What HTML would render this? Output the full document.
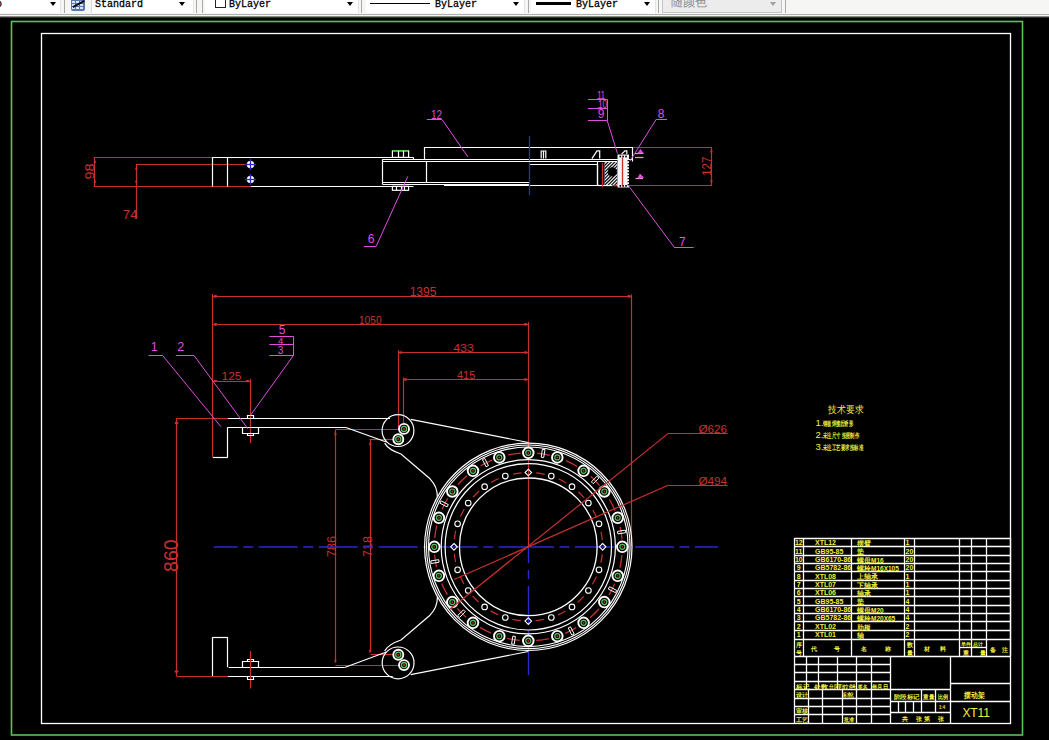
<!DOCTYPE html>
<html><head><meta charset="utf-8"><style>
html,body{margin:0;padding:0;width:1049px;height:740px;overflow:hidden;background:#000;}
#tb{position:absolute;left:0;top:0;width:1049px;height:14px;background:#f6f6f4;overflow:hidden;}
.cb{position:absolute;top:0;height:13px;background:#fff;border-right:1px solid #e4e4e4;}
.ar{position:absolute;top:2px;width:0;height:0;border-left:3.5px solid transparent;border-right:3.5px solid transparent;border-top:4px solid #000;}
.sep{position:absolute;top:0;width:1px;height:13px;background:#a8a8a8;}
.tx{position:absolute;top:-1px;font-family:"Liberation Mono",monospace;font-size:10px;line-height:12px;color:#000;-webkit-text-stroke:0.3px #000;}
#bot1{position:absolute;left:0;top:14px;width:1049px;height:1px;background:#b0b0b0;}
#bot2{position:absolute;left:0;top:15px;width:1049px;height:1px;background:#f4f4f4;}
#bot3{position:absolute;left:0;top:16px;width:1049px;height:1px;background:#8a8a8a;}
#bot4{position:absolute;left:0;top:17px;width:1049px;height:1px;background:#303030;}
svg{position:absolute;left:0;top:0;}
</style></head><body>
<div id="tb">
 <div class="cb" style="left:0;width:60px"></div><div class="tx" style="left:-4px">o</div><div class="ar" style="left:50px"></div>
 <div class="sep" style="left:64px"></div>
 <div style="position:absolute;left:71px;top:-1px;width:14px;height:12px;background:#5a76ae;border-radius:0 0 2px 2px"></div><div style="position:absolute;left:72px;top:1px;width:3px;height:2px;background:#dde6f6"></div><div style="position:absolute;left:72px;top:4px;width:3px;height:2px;background:#dde6f6"></div><div style="position:absolute;left:72px;top:7px;width:3px;height:2px;background:#dde6f6"></div><div style="position:absolute;left:76px;top:1px;width:3px;height:2px;background:#dde6f6"></div><div style="position:absolute;left:76px;top:4px;width:3px;height:2px;background:#dde6f6"></div><div style="position:absolute;left:76px;top:7px;width:3px;height:2px;background:#dde6f6"></div><div style="position:absolute;left:80px;top:1px;width:3px;height:2px;background:#dde6f6"></div><div style="position:absolute;left:80px;top:4px;width:3px;height:2px;background:#dde6f6"></div><div style="position:absolute;left:80px;top:7px;width:3px;height:2px;background:#dde6f6"></div><div style="position:absolute;left:72px;top:2.5px;width:13px;height:1.6px;background:#111;transform:rotate(-28deg)"></div>
 <div class="cb" style="left:91px;width:101px;border-left:1px solid #d8d8d8"></div><div class="tx" style="left:95px">Standard</div><div class="ar" style="left:179px"></div>
 <div class="sep" style="left:196px"></div><div class="sep" style="left:202px"></div>
 <div class="cb" style="left:205px;width:153px"></div>
 <div style="position:absolute;left:215px;top:-3px;width:9px;height:9px;border:1px solid #222;background:#fff"></div>
 <div class="tx" style="left:229px">ByLayer</div><div class="ar" style="left:347px"></div>
 <div class="sep" style="left:361px"></div>
 <div class="cb" style="left:366px;width:158px"></div>
 <div style="position:absolute;left:370px;top:3px;width:60px;height:1px;background:#000"></div>
 <div class="tx" style="left:435px">ByLayer</div><div class="ar" style="left:513px"></div>
 <div class="sep" style="left:528px"></div>
 <div class="cb" style="left:531px;width:124px"></div>
 <div style="position:absolute;left:536px;top:2px;width:35px;height:3px;background:#000"></div>
 <div class="tx" style="left:576px">ByLayer</div><div class="ar" style="left:644px"></div>
 <div class="sep" style="left:658px"></div>
 <div style="position:absolute;left:662px;top:-1px;width:118px;height:12px;background:#ececec;border:1px solid #c4c4c4"></div>
 <div style="position:absolute;left:671px;top:-5px;font-family:'Liberation Sans',sans-serif;font-size:12px;line-height:14px;color:#8a8a8a">随颜色</div>
 <div class="ar" style="left:770px;border-top-color:#a0a0a0"></div>
 <div class="sep" style="left:785px"></div>
</div>
<div id="bot1"></div><div id="bot2"></div><div id="bot3"></div><div id="bot4"></div>
<svg width="1049" height="740" viewBox="0 0 1049 740" style="top:0">
<g>
<rect x="11.5" y="21.5" width="1011.0" height="713.5" fill="none" stroke="#5cc05c" stroke-width="1.6"/>
<rect x="41.5" y="33.5" width="969.0" height="690.0" fill="none" stroke="#ffffff" stroke-width="1.3"/>
<line x1="93.5" y1="157.5" x2="212.4" y2="157.5" stroke="#c83030" stroke-width="1.2"/>
<line x1="136.0" y1="164.5" x2="249.0" y2="164.5" stroke="#c83030" stroke-width="1.2"/>
<line x1="93.5" y1="186.5" x2="250.8" y2="186.5" stroke="#c83030" stroke-width="1.2"/>
<line x1="94.5" y1="157.3" x2="94.5" y2="186.5" stroke="#c83030" stroke-width="1.2"/>
<line x1="136.5" y1="164.5" x2="136.5" y2="219.0" stroke="#c83030" stroke-width="1.2"/>
<ellipse cx="94.8" cy="161.9" rx="1.1" ry="1.6" fill="#c83030"/>
<ellipse cx="94.8" cy="181.7" rx="1.1" ry="1.6" fill="#c83030"/>
<ellipse cx="136.4" cy="168.8" rx="1.1" ry="1.6" fill="#c83030"/>
<ellipse cx="136.4" cy="181.7" rx="1.1" ry="1.6" fill="#c83030"/>
<text x="94.3" y="171.5" fill="#c83030" font-size="12" font-family="Liberation Sans" text-anchor="middle" transform="rotate(-90 94.3 171.5)" textLength="16.1" lengthAdjust="spacingAndGlyphs">98</text>
<text x="122.8" y="219.0" fill="#c83030" font-size="13.5" font-family="Liberation Sans" text-anchor="start" textLength="14.7" lengthAdjust="spacingAndGlyphs">74</text>
<line x1="212.4" y1="157.5" x2="413.4" y2="157.5" stroke="#ffffff" stroke-width="1.2"/>
<line x1="250.8" y1="186.5" x2="413.4" y2="186.5" stroke="#ffffff" stroke-width="1.2"/>
<line x1="212.5" y1="157.3" x2="212.5" y2="186.5" stroke="#ffffff" stroke-width="1.2"/>
<line x1="227.5" y1="157.3" x2="227.5" y2="186.5" stroke="#ffffff" stroke-width="1.2"/>
<circle cx="250.5" cy="164.5" r="3.5" fill="#ffffff" stroke="#ffffff" stroke-width="0.5"/>
<line x1="245.0" y1="164.5" x2="256.0" y2="164.5" stroke="#2a2ad0" stroke-width="1.3"/>
<line x1="250.5" y1="159.0" x2="250.5" y2="170.0" stroke="#2a2ad0" stroke-width="1.3"/>
<circle cx="250.5" cy="179.4" r="3.5" fill="#ffffff" stroke="#ffffff" stroke-width="0.5"/>
<line x1="245.0" y1="179.5" x2="256.0" y2="179.5" stroke="#2a2ad0" stroke-width="1.3"/>
<line x1="250.5" y1="173.9" x2="250.5" y2="184.9" stroke="#2a2ad0" stroke-width="1.3"/>
<line x1="413.5" y1="157.4" x2="413.5" y2="159.0" stroke="#ffffff" stroke-width="1.2"/>
<line x1="382.3" y1="159.5" x2="633.0" y2="159.5" stroke="#ffffff" stroke-width="1.2"/>
<line x1="382.3" y1="161.5" x2="616.7" y2="161.5" stroke="#ffffff" stroke-width="1.2"/>
<line x1="382.5" y1="159.5" x2="382.5" y2="184.0" stroke="#ffffff" stroke-width="1.2"/>
<line x1="426.5" y1="161.2" x2="426.5" y2="182.2" stroke="#ffffff" stroke-width="1.2"/>
<line x1="382.3" y1="182.5" x2="529.0" y2="182.5" stroke="#ffffff" stroke-width="1.2"/>
<line x1="382.3" y1="184.5" x2="529.0" y2="184.5" stroke="#ffffff" stroke-width="1.2"/>
<line x1="444.0" y1="185.5" x2="529.0" y2="185.5" stroke="#ffffff" stroke-width="1.2"/>
<polyline points="529.0,164.5 597.5,164.5 597.5,185.5 529.0,185.5" fill="none" stroke="#ffffff" stroke-width="1.2"/>
<polyline points="424.5,159.5 424.5,147.5 632.5,147.5 632.5,161.5" fill="none" stroke="#ffffff" stroke-width="1.2"/>
<polyline points="541.2,158.6 541.2,151.0 545.8,151.0 545.8,158.6" fill="none" stroke="#ffffff" stroke-width="1.2"/>
<line x1="543.5" y1="151.0" x2="543.5" y2="158.6" stroke="#ffffff" stroke-width="1.2"/>
<polyline points="591.9,158.6 597.0,150.8 599.7,150.8 599.7,158.6" fill="none" stroke="#ffffff" stroke-width="1.2"/>
<polyline points="621.6,154.1 625.0,150.8 626.8,150.8 626.8,154.0" fill="none" stroke="#ffffff" stroke-width="1.2"/>
<rect x="392.4" y="150.9" width="16.2" height="6.5" fill="none" stroke="#ffffff" stroke-width="1.2"/>
<line x1="398.5" y1="150.9" x2="398.5" y2="157.4" stroke="#ffffff" stroke-width="1.2"/>
<line x1="403.5" y1="150.9" x2="403.5" y2="157.4" stroke="#ffffff" stroke-width="1.2"/>
<line x1="393.0" y1="150.5" x2="408.0" y2="150.5" stroke="#5cc05c" stroke-width="1"/>
<rect x="392.4" y="186.3" width="16.2" height="4.0" fill="none" stroke="#ffffff" stroke-width="1.2"/>
<line x1="396.5" y1="186.3" x2="396.5" y2="190.3" stroke="#ffffff" stroke-width="1.2"/>
<line x1="401.5" y1="186.3" x2="401.5" y2="190.3" stroke="#ffffff" stroke-width="1.2"/>
<line x1="404.5" y1="186.3" x2="404.5" y2="190.3" stroke="#ffffff" stroke-width="1.2"/>
<line x1="529.5" y1="135.8" x2="529.5" y2="195.2" stroke="#2a2ad0" stroke-width="1.3"/>
<line x1="597.5" y1="162.0" x2="597.5" y2="186.0" stroke="#ffffff" stroke-width="1.2"/>
<clipPath id="hc"><rect x="604.5" y="162" width="13" height="23.5"/></clipPath>
<rect x="604.5" y="162" width="13" height="23.5" fill="#eeeeee"/>
<g clip-path="url(#hc)"><line x1="560.3" y1="190" x2="590.3" y2="160" stroke="#000" stroke-width="1.1"/><line x1="563.6" y1="190" x2="593.6" y2="160" stroke="#000" stroke-width="1.1"/><line x1="566.9" y1="190" x2="596.9" y2="160" stroke="#000" stroke-width="1.1"/><line x1="570.2" y1="190" x2="600.2" y2="160" stroke="#000" stroke-width="1.1"/><line x1="573.5" y1="190" x2="603.5" y2="160" stroke="#000" stroke-width="1.1"/><line x1="576.8" y1="190" x2="606.8" y2="160" stroke="#000" stroke-width="1.1"/><line x1="580.1" y1="190" x2="610.1" y2="160" stroke="#000" stroke-width="1.1"/><line x1="583.4" y1="190" x2="613.4" y2="160" stroke="#000" stroke-width="1.1"/><line x1="586.7" y1="190" x2="616.7" y2="160" stroke="#000" stroke-width="1.1"/><line x1="590.0" y1="190" x2="620.0" y2="160" stroke="#000" stroke-width="1.1"/><line x1="593.3" y1="190" x2="623.3" y2="160" stroke="#000" stroke-width="1.1"/><line x1="596.6" y1="190" x2="626.6" y2="160" stroke="#000" stroke-width="1.1"/><line x1="599.9" y1="190" x2="629.9" y2="160" stroke="#000" stroke-width="1.1"/><line x1="603.2" y1="190" x2="633.2" y2="160" stroke="#000" stroke-width="1.1"/><line x1="606.5" y1="190" x2="636.5" y2="160" stroke="#000" stroke-width="1.1"/><line x1="609.8" y1="190" x2="639.8" y2="160" stroke="#000" stroke-width="1.1"/><line x1="613.1" y1="190" x2="643.1" y2="160" stroke="#000" stroke-width="1.1"/></g>
<circle cx="612.3" cy="171.9" r="4.1" fill="#000" stroke="#000" stroke-width="1"/>
<line x1="597.8" y1="185.5" x2="617.5" y2="185.5" stroke="#ffffff" stroke-width="1.2"/>
<line x1="382.3" y1="161.5" x2="617.0" y2="161.5" stroke="#ffffff" stroke-width="1.2"/>
<rect x="617.5" y="154.5" width="11.5" height="33" fill="#f4f4f4"/>
<rect x="627.6" y="160" width="1.3" height="1.3" fill="#000"/>
<rect x="627.6" y="163" width="1.3" height="1.3" fill="#000"/>
<rect x="627.6" y="166" width="1.3" height="1.3" fill="#000"/>
<rect x="627.6" y="169" width="1.3" height="1.3" fill="#000"/>
<rect x="627.6" y="172" width="1.3" height="1.3" fill="#000"/>
<rect x="627.6" y="175" width="1.3" height="1.3" fill="#000"/>
<rect x="627.6" y="178" width="1.3" height="1.3" fill="#000"/>
<rect x="627.6" y="181" width="1.3" height="1.3" fill="#000"/>
<rect x="627.6" y="184" width="1.3" height="1.3" fill="#000"/>
<rect x="619.5" y="155.6" width="1.6" height="1.8" fill="#000"/>
<rect x="619.5" y="185" width="1.6" height="1.8" fill="#000"/>
<rect x="622.3" y="155.6" width="1.6" height="1.8" fill="#000"/>
<rect x="622.3" y="185" width="1.6" height="1.8" fill="#000"/>
<rect x="625.2" y="155.6" width="1.6" height="1.8" fill="#000"/>
<rect x="625.2" y="185" width="1.6" height="1.8" fill="#000"/>
<line x1="622.5" y1="157.5" x2="622.5" y2="186.0" stroke="#c83030" stroke-width="1.3"/>
<line x1="602.5" y1="163.0" x2="602.5" y2="187.0" stroke="#c83030" stroke-width="1.3"/>
<line x1="612.0" y1="185.5" x2="617.0" y2="185.5" stroke="#c83030" stroke-width="1.2"/>
<line x1="633.0" y1="147.5" x2="712.0" y2="147.5" stroke="#c83030" stroke-width="1.2"/>
<line x1="629.0" y1="185.5" x2="712.0" y2="185.5" stroke="#c83030" stroke-width="1.2"/>
<line x1="711.5" y1="147.4" x2="711.5" y2="185.2" stroke="#c83030" stroke-width="1.2"/>
<ellipse cx="711.4" cy="151.5" rx="1.1" ry="1.6" fill="#c83030"/>
<ellipse cx="711.4" cy="181.0" rx="1.1" ry="1.6" fill="#c83030"/>
<text x="711.2" y="166.2" fill="#c83030" font-size="13.5" font-family="Liberation Sans" text-anchor="middle" transform="rotate(-90 711.2 166.2)" textLength="19" lengthAdjust="spacingAndGlyphs">127</text>
<line x1="426.8" y1="119.5" x2="442.0" y2="119.5" stroke="#e04ee0" stroke-width="1"/>
<line x1="442.0" y1="119.5" x2="467.9" y2="156.9" stroke="#e04ee0" stroke-width="1"/>
<text x="436.5" y="119.0" fill="#e04ee0" font-size="12" font-family="Liberation Sans" text-anchor="middle" textLength="11" lengthAdjust="spacingAndGlyphs">12</text>
<line x1="364.0" y1="246.5" x2="376.2" y2="246.5" stroke="#e04ee0" stroke-width="1"/>
<line x1="376.2" y1="246.3" x2="407.8" y2="176.4" stroke="#e04ee0" stroke-width="1"/>
<text x="371.0" y="243.4" fill="#e04ee0" font-size="12" font-family="Liberation Sans" text-anchor="middle">6</text>
<line x1="587.9" y1="99.5" x2="607.3" y2="99.5" stroke="#e04ee0" stroke-width="1"/>
<line x1="587.9" y1="108.5" x2="607.3" y2="108.5" stroke="#e04ee0" stroke-width="1"/>
<line x1="587.9" y1="120.5" x2="607.3" y2="120.5" stroke="#e04ee0" stroke-width="1"/>
<line x1="607.5" y1="99.3" x2="607.5" y2="120.8" stroke="#e04ee0" stroke-width="1"/>
<line x1="607.3" y1="120.8" x2="617.4" y2="153.4" stroke="#e04ee0" stroke-width="1"/>
<text x="601.1" y="99.3" fill="#e04ee0" font-size="11.5" font-family="Liberation Sans" text-anchor="middle" textLength="7.8" lengthAdjust="spacingAndGlyphs">11</text>
<text x="602.6" y="108.3" fill="#e04ee0" font-size="11.5" font-family="Liberation Sans" text-anchor="middle" textLength="9.3" lengthAdjust="spacingAndGlyphs">10</text>
<text x="601.1" y="118.4" fill="#e04ee0" font-size="12" font-family="Liberation Sans" text-anchor="middle">9</text>
<ellipse cx="598.0" cy="99.3" rx="1" ry="1" fill="#e04ee0"/>
<ellipse cx="603.5" cy="99.3" rx="1" ry="1" fill="#e04ee0"/>
<ellipse cx="598.0" cy="108.6" rx="1" ry="1" fill="#e04ee0"/>
<line x1="656.3" y1="119.5" x2="667.0" y2="119.5" stroke="#e04ee0" stroke-width="1"/>
<line x1="656.3" y1="119.2" x2="629.9" y2="161.2" stroke="#e04ee0" stroke-width="1"/>
<text x="661.0" y="118.4" fill="#e04ee0" font-size="12" font-family="Liberation Sans" text-anchor="middle">8</text>
<line x1="674.0" y1="247.5" x2="693.7" y2="247.5" stroke="#e04ee0" stroke-width="1"/>
<line x1="628.0" y1="185.0" x2="674.0" y2="247.0" stroke="#e04ee0" stroke-width="1"/>
<text x="682.3" y="246.0" fill="#e04ee0" font-size="12" font-family="Liberation Sans" text-anchor="middle">7</text>
<line x1="635.0" y1="153.5" x2="643.5" y2="153.5" stroke="#f0a0b0" stroke-width="1.2"/>
<line x1="635.0" y1="157.5" x2="643.5" y2="157.5" stroke="#f0a0b0" stroke-width="1.2"/>
<path d="M638,153 L640.5,149.5 L643,153 Z" fill="#e04ee0" stroke="#e04ee0" stroke-width="0.8"/>
<line x1="635.5" y1="178.5" x2="643.0" y2="178.5" stroke="#f0a0b0" stroke-width="1.2"/>
<path d="M638,178 L640,174 L643.5,177.5 Z" fill="#e04ee0" stroke="#e04ee0" stroke-width="0.8"/>
<line x1="212.9" y1="296.5" x2="631.9" y2="296.5" stroke="#c83030" stroke-width="1.2"/>
<text x="409.7" y="295.6" fill="#c83030" font-size="12" font-family="Liberation Sans" text-anchor="start" textLength="26.7" lengthAdjust="spacingAndGlyphs">1395</text>
<line x1="212.9" y1="324.5" x2="528.3" y2="324.5" stroke="#c83030" stroke-width="1.2"/>
<text x="358.8" y="323.5" fill="#c83030" font-size="10.7" font-family="Liberation Sans" text-anchor="start" textLength="22.8" lengthAdjust="spacingAndGlyphs">1050</text>
<line x1="398.3" y1="352.5" x2="528.3" y2="352.5" stroke="#c83030" stroke-width="1.2"/>
<text x="453.2" y="351.7" fill="#c83030" font-size="10.7" font-family="Liberation Sans" text-anchor="start" textLength="20.6" lengthAdjust="spacingAndGlyphs">433</text>
<line x1="402.9" y1="379.5" x2="528.3" y2="379.5" stroke="#c83030" stroke-width="1.2"/>
<text x="457.0" y="379.0" fill="#c83030" font-size="11" font-family="Liberation Sans" text-anchor="start" textLength="18.3" lengthAdjust="spacingAndGlyphs">415</text>
<line x1="212.9" y1="381.5" x2="250.1" y2="381.5" stroke="#c83030" stroke-width="1.2"/>
<text x="221.5" y="380.0" fill="#c83030" font-size="10.5" font-family="Liberation Sans" text-anchor="start" textLength="20" lengthAdjust="spacingAndGlyphs">125</text>
<line x1="212.5" y1="294.0" x2="212.5" y2="457.3" stroke="#c83030" stroke-width="1.2"/>
<line x1="631.5" y1="294.5" x2="631.5" y2="546.0" stroke="#c83030" stroke-width="1.2"/>
<line x1="528.5" y1="322.0" x2="528.5" y2="546.8" stroke="#c83030" stroke-width="1.2"/>
<line x1="398.5" y1="350.2" x2="398.5" y2="429.5" stroke="#c83030" stroke-width="1.2"/>
<line x1="403.5" y1="377.5" x2="403.5" y2="428.5" stroke="#c83030" stroke-width="1.2"/>
<line x1="250.5" y1="378.7" x2="250.5" y2="443.0" stroke="#c83030" stroke-width="1.2"/>
<ellipse cx="215.5" cy="296.4" rx="1.9" ry="1.3" fill="#c83030"/>
<ellipse cx="629.0" cy="296.4" rx="1.9" ry="1.3" fill="#c83030"/>
<ellipse cx="215.5" cy="324.4" rx="1.9" ry="1.3" fill="#c83030"/>
<ellipse cx="525.5" cy="324.4" rx="1.9" ry="1.3" fill="#c83030"/>
<ellipse cx="401.0" cy="352.5" rx="1.9" ry="1.3" fill="#c83030"/>
<ellipse cx="525.5" cy="352.5" rx="1.9" ry="1.3" fill="#c83030"/>
<ellipse cx="405.5" cy="379.5" rx="1.9" ry="1.3" fill="#c83030"/>
<ellipse cx="525.5" cy="379.5" rx="1.9" ry="1.3" fill="#c83030"/>
<ellipse cx="215.5" cy="381.0" rx="1.9" ry="1.3" fill="#c83030"/>
<ellipse cx="247.5" cy="381.0" rx="1.9" ry="1.3" fill="#c83030"/>
<line x1="175.8" y1="418.5" x2="228.7" y2="418.5" stroke="#c83030" stroke-width="1.2"/>
<line x1="176.5" y1="418.1" x2="176.5" y2="676.0" stroke="#c83030" stroke-width="1.2"/>
<line x1="176.6" y1="676.5" x2="227.8" y2="676.5" stroke="#c83030" stroke-width="1.2"/>
<ellipse cx="176.6" cy="423.0" rx="1.9" ry="1.3" fill="#c83030"/>
<ellipse cx="176.6" cy="671.5" rx="1.9" ry="1.3" fill="#c83030"/>
<ellipse cx="176.6" cy="423" rx="1.1" ry="1.8" fill="#c83030"/>
<text x="177.6" y="555.7" fill="#c83030" font-size="20" font-family="Liberation Sans" text-anchor="middle" transform="rotate(-90 177.6 555.7)" textLength="32.4" lengthAdjust="spacingAndGlyphs">860</text>
<line x1="335.5" y1="430.0" x2="335.5" y2="660.5" stroke="#c83030" stroke-width="1.2"/>
<line x1="335.4" y1="429.5" x2="398.0" y2="429.5" stroke="#c83030" stroke-width="1.2"/>
<line x1="335.4" y1="665.5" x2="403.0" y2="665.5" stroke="#c83030" stroke-width="1.2"/>
<line x1="370.5" y1="439.4" x2="370.5" y2="651.4" stroke="#c83030" stroke-width="1.2"/>
<line x1="369.7" y1="439.5" x2="398.0" y2="439.5" stroke="#c83030" stroke-width="1.2"/>
<line x1="370.6" y1="654.5" x2="396.5" y2="654.5" stroke="#c83030" stroke-width="1.2"/>
<ellipse cx="335.4" cy="434.0" rx="1.1" ry="1.7" fill="#c83030"/>
<ellipse cx="335.4" cy="661.0" rx="1.1" ry="1.7" fill="#c83030"/>
<ellipse cx="370.2" cy="444.0" rx="1.1" ry="1.7" fill="#c83030"/>
<ellipse cx="370.2" cy="651.0" rx="1.1" ry="1.7" fill="#c83030"/>
<text x="336.5" y="546.6" fill="#c83030" font-size="13.5" font-family="Liberation Sans" text-anchor="middle" transform="rotate(-90 336.5 546.6)" textLength="21.3" lengthAdjust="spacingAndGlyphs">786</text>
<text x="372.2" y="546.5" fill="#c83030" font-size="13.5" font-family="Liberation Sans" text-anchor="middle" transform="rotate(-90 372.2 546.5)" textLength="21" lengthAdjust="spacingAndGlyphs">718</text>
<line x1="213.7" y1="547" x2="528.3" y2="547" stroke="#2a2ad0" stroke-width="1.4" stroke-dasharray="39,5.5,10,5.5" stroke-dashoffset="15"/>
<line x1="718" y1="547" x2="528.3" y2="547" stroke="#2a2ad0" stroke-width="1.4" stroke-dasharray="39,5.5,10,5.5" stroke-dashoffset="16"/>
<line x1="528.5" y1="547" x2="528.5" y2="675" stroke="#2a2ad0" stroke-width="1.4" stroke-dasharray="38,7,9,7" stroke-dashoffset="22"/>
<line x1="227.9" y1="418.5" x2="390.0" y2="418.5" stroke="#ffffff" stroke-width="1.2"/>
<line x1="227.9" y1="427.5" x2="345.9" y2="427.5" stroke="#ffffff" stroke-width="1.2"/>
<line x1="345.9" y1="427.5" x2="386.3" y2="442.0" stroke="#ffffff" stroke-width="1.2"/>
<line x1="227.5" y1="427.2" x2="227.5" y2="457.3" stroke="#ffffff" stroke-width="1.2"/>
<line x1="212.9" y1="457.5" x2="227.9" y2="457.5" stroke="#ffffff" stroke-width="1.2"/>
<path d="M242.5,427.5 V433.5 H258.5 V427.5" fill="none" stroke="#ffffff" stroke-width="1.2"/>
<path d="M247.5,433.5 V435.5 H253.5 V433.5" fill="none" stroke="#ffffff" stroke-width="1.2"/>
<path d="M247.5,418.5 V415.5 H253.5 V418.5" fill="none" stroke="#ffffff" stroke-width="1.2"/>
<line x1="228.7" y1="667.5" x2="344.6" y2="667.5" stroke="#ffffff" stroke-width="1.2"/>
<line x1="227.8" y1="676.5" x2="392.7" y2="676.5" stroke="#ffffff" stroke-width="1.2"/>
<line x1="344.6" y1="667.5" x2="386.3" y2="652.0" stroke="#ffffff" stroke-width="1.2"/>
<line x1="212.3" y1="637.5" x2="227.8" y2="637.5" stroke="#ffffff" stroke-width="1.2"/>
<line x1="227.5" y1="637.4" x2="227.5" y2="667.2" stroke="#ffffff" stroke-width="1.2"/>
<line x1="212.5" y1="637.4" x2="212.5" y2="676.0" stroke="#ffffff" stroke-width="1.2"/>
<path d="M242.5,667.5 V661.5 H258.5 V667.5" fill="none" stroke="#ffffff" stroke-width="1.2"/>
<path d="M247.5,661.5 V659.5 H253.5 V661.5" fill="none" stroke="#ffffff" stroke-width="1.2"/>
<line x1="250.5" y1="651.0" x2="250.5" y2="688.5" stroke="#c83030" stroke-width="1.2"/>
<path d="M247.5,676.5 V679.5 H253.5 V676.5" fill="none" stroke="#ffffff" stroke-width="1.2"/>
<circle cx="398.0" cy="430.6" r="15.9" fill="none" stroke="#ffffff" stroke-width="1.2"/>
<circle cx="404.0" cy="428.9" r="5.0" fill="#000" stroke="#ffffff" stroke-width="1.9"/>
<circle cx="404.0" cy="428.9" r="2.6" fill="none" stroke="#5cc05c" stroke-width="1.3"/>
<ellipse cx="404.0" cy="428.9" rx="1" ry="1" fill="#c83030"/>
<circle cx="398.3" cy="439.2" r="5.0" fill="#000" stroke="#ffffff" stroke-width="1.9"/>
<circle cx="398.3" cy="439.2" r="2.6" fill="none" stroke="#5cc05c" stroke-width="1.3"/>
<ellipse cx="398.3" cy="439.2" rx="1" ry="1" fill="#c83030"/>
<circle cx="398.1" cy="662.9" r="15.9" fill="none" stroke="#ffffff" stroke-width="1.2"/>
<circle cx="398.3" cy="654.8" r="5.0" fill="#000" stroke="#ffffff" stroke-width="1.9"/>
<circle cx="398.3" cy="654.8" r="2.6" fill="none" stroke="#5cc05c" stroke-width="1.3"/>
<ellipse cx="398.3" cy="654.8" rx="1" ry="1" fill="#c83030"/>
<circle cx="404.0" cy="665.1" r="5.0" fill="#000" stroke="#ffffff" stroke-width="1.9"/>
<circle cx="404.0" cy="665.1" r="2.6" fill="none" stroke="#5cc05c" stroke-width="1.3"/>
<ellipse cx="404.0" cy="665.1" rx="1" ry="1" fill="#c83030"/>
<path d="M410.7,419.3 L528.3,442.5" fill="none" stroke="#ffffff" stroke-width="1.2"/>
<path d="M410.7,674.7 L528.3,651.5" fill="none" stroke="#ffffff" stroke-width="1.2"/>
<path d="M384.7,443.1 C388,449 395,452 401,454 L430,478.8 C435,484 437.5,489 437.4,497" fill="none" stroke="#ffffff" stroke-width="1.2"/>
<path d="M384.7,650.9 C388,645 395,642 401,640 L430,615.2 C435,610 437.5,605 437.4,597" fill="none" stroke="#ffffff" stroke-width="1.2"/>
<circle cx="528.3" cy="546.8" r="103.7" fill="none" stroke="#ffffff" stroke-width="1.2"/>
<circle cx="528.3" cy="546.8" r="101.8" fill="none" stroke="#ffffff" stroke-width="1.1"/>
<circle cx="528.3" cy="546.8" r="99.8" fill="none" stroke="#ffffff" stroke-width="1.1"/>
<circle cx="528.3" cy="546.8" r="87.1" fill="none" stroke="#ffffff" stroke-width="1.2"/>
<circle cx="528.3" cy="546.8" r="83.2" fill="none" stroke="#ffffff" stroke-width="1.2"/>
<circle cx="528.3" cy="546.8" r="68.8" fill="none" stroke="#ffffff" stroke-width="1.3"/>
<circle cx="528.3" cy="546.8" r="94" fill="none" stroke="#c83030" stroke-width="1.3" stroke-dasharray="12.5,17.031" stroke-dashoffset="-8.515"/>
<circle cx="528.3" cy="546.8" r="74.3" fill="none" stroke="#c83030" stroke-width="1.2" stroke-dasharray="8.5,14.842" stroke-dashoffset="-7.421"/>
<circle cx="528.3" cy="452.8" r="5.3" fill="#000" stroke="#ffffff" stroke-width="1.9"/>
<circle cx="528.3" cy="452.8" r="2.5" fill="none" stroke="#5cc05c" stroke-width="1.2"/>
<ellipse cx="528.3" cy="452.8" rx="0.9" ry="0.9" fill="#c83030"/>
<polygon points="528.3,469.2 531.6,472.5 528.3,475.8 525.0,472.5" fill="none" stroke="#ffffff" stroke-width="1.1"/>
<circle cx="557.3" cy="457.4" r="5.3" fill="#000" stroke="#ffffff" stroke-width="1.9"/>
<circle cx="557.3" cy="457.4" r="2.5" fill="none" stroke="#5cc05c" stroke-width="1.2"/>
<ellipse cx="557.3" cy="457.4" rx="0.9" ry="0.9" fill="#c83030"/>
<circle cx="551.3" cy="476.1" r="2.8" fill="#000" stroke="#ffffff" stroke-width="1.1"/>
<circle cx="583.6" cy="470.8" r="5.3" fill="#000" stroke="#ffffff" stroke-width="1.9"/>
<circle cx="583.6" cy="470.8" r="2.5" fill="none" stroke="#5cc05c" stroke-width="1.2"/>
<ellipse cx="583.6" cy="470.8" rx="0.9" ry="0.9" fill="#c83030"/>
<circle cx="572.0" cy="486.7" r="2.8" fill="#000" stroke="#ffffff" stroke-width="1.1"/>
<circle cx="604.3" cy="491.5" r="5.3" fill="#000" stroke="#ffffff" stroke-width="1.9"/>
<circle cx="604.3" cy="491.5" r="2.5" fill="none" stroke="#5cc05c" stroke-width="1.2"/>
<ellipse cx="604.3" cy="491.5" rx="0.9" ry="0.9" fill="#c83030"/>
<circle cx="588.4" cy="503.1" r="2.8" fill="#000" stroke="#ffffff" stroke-width="1.1"/>
<circle cx="617.7" cy="517.8" r="5.3" fill="#000" stroke="#ffffff" stroke-width="1.9"/>
<circle cx="617.7" cy="517.8" r="2.5" fill="none" stroke="#5cc05c" stroke-width="1.2"/>
<ellipse cx="617.7" cy="517.8" rx="0.9" ry="0.9" fill="#c83030"/>
<circle cx="599.0" cy="523.8" r="2.8" fill="#000" stroke="#ffffff" stroke-width="1.1"/>
<circle cx="622.3" cy="546.8" r="5.3" fill="#000" stroke="#ffffff" stroke-width="1.9"/>
<circle cx="622.3" cy="546.8" r="2.5" fill="none" stroke="#5cc05c" stroke-width="1.2"/>
<ellipse cx="622.3" cy="546.8" rx="0.9" ry="0.9" fill="#c83030"/>
<polygon points="602.6,543.5 605.9,546.8 602.6,550.1 599.3,546.8" fill="none" stroke="#ffffff" stroke-width="1.1"/>
<circle cx="617.7" cy="575.8" r="5.3" fill="#000" stroke="#ffffff" stroke-width="1.9"/>
<circle cx="617.7" cy="575.8" r="2.5" fill="none" stroke="#5cc05c" stroke-width="1.2"/>
<ellipse cx="617.7" cy="575.8" rx="0.9" ry="0.9" fill="#c83030"/>
<circle cx="599.0" cy="569.8" r="2.8" fill="#000" stroke="#ffffff" stroke-width="1.1"/>
<circle cx="604.3" cy="602.1" r="5.3" fill="#000" stroke="#ffffff" stroke-width="1.9"/>
<circle cx="604.3" cy="602.1" r="2.5" fill="none" stroke="#5cc05c" stroke-width="1.2"/>
<ellipse cx="604.3" cy="602.1" rx="0.9" ry="0.9" fill="#c83030"/>
<circle cx="588.4" cy="590.5" r="2.8" fill="#000" stroke="#ffffff" stroke-width="1.1"/>
<circle cx="583.6" cy="622.8" r="5.3" fill="#000" stroke="#ffffff" stroke-width="1.9"/>
<circle cx="583.6" cy="622.8" r="2.5" fill="none" stroke="#5cc05c" stroke-width="1.2"/>
<ellipse cx="583.6" cy="622.8" rx="0.9" ry="0.9" fill="#c83030"/>
<circle cx="572.0" cy="606.9" r="2.8" fill="#000" stroke="#ffffff" stroke-width="1.1"/>
<circle cx="557.3" cy="636.2" r="5.3" fill="#000" stroke="#ffffff" stroke-width="1.9"/>
<circle cx="557.3" cy="636.2" r="2.5" fill="none" stroke="#5cc05c" stroke-width="1.2"/>
<ellipse cx="557.3" cy="636.2" rx="0.9" ry="0.9" fill="#c83030"/>
<circle cx="551.3" cy="617.5" r="2.8" fill="#000" stroke="#ffffff" stroke-width="1.1"/>
<circle cx="528.3" cy="640.8" r="5.3" fill="#000" stroke="#ffffff" stroke-width="1.9"/>
<circle cx="528.3" cy="640.8" r="2.5" fill="none" stroke="#5cc05c" stroke-width="1.2"/>
<ellipse cx="528.3" cy="640.8" rx="0.9" ry="0.9" fill="#c83030"/>
<polygon points="528.3,617.8 531.6,621.1 528.3,624.4 525.0,621.1" fill="none" stroke="#ffffff" stroke-width="1.1"/>
<circle cx="499.3" cy="636.2" r="5.3" fill="#000" stroke="#ffffff" stroke-width="1.9"/>
<circle cx="499.3" cy="636.2" r="2.5" fill="none" stroke="#5cc05c" stroke-width="1.2"/>
<ellipse cx="499.3" cy="636.2" rx="0.9" ry="0.9" fill="#c83030"/>
<circle cx="505.3" cy="617.5" r="2.8" fill="#000" stroke="#ffffff" stroke-width="1.1"/>
<circle cx="473.0" cy="622.8" r="5.3" fill="#000" stroke="#ffffff" stroke-width="1.9"/>
<circle cx="473.0" cy="622.8" r="2.5" fill="none" stroke="#5cc05c" stroke-width="1.2"/>
<ellipse cx="473.0" cy="622.8" rx="0.9" ry="0.9" fill="#c83030"/>
<circle cx="484.6" cy="606.9" r="2.8" fill="#000" stroke="#ffffff" stroke-width="1.1"/>
<circle cx="452.3" cy="602.1" r="5.3" fill="#000" stroke="#ffffff" stroke-width="1.9"/>
<circle cx="452.3" cy="602.1" r="2.5" fill="none" stroke="#5cc05c" stroke-width="1.2"/>
<ellipse cx="452.3" cy="602.1" rx="0.9" ry="0.9" fill="#c83030"/>
<circle cx="468.2" cy="590.5" r="2.8" fill="#000" stroke="#ffffff" stroke-width="1.1"/>
<circle cx="438.9" cy="575.8" r="5.3" fill="#000" stroke="#ffffff" stroke-width="1.9"/>
<circle cx="438.9" cy="575.8" r="2.5" fill="none" stroke="#5cc05c" stroke-width="1.2"/>
<ellipse cx="438.9" cy="575.8" rx="0.9" ry="0.9" fill="#c83030"/>
<circle cx="457.6" cy="569.8" r="2.8" fill="#000" stroke="#ffffff" stroke-width="1.1"/>
<circle cx="434.3" cy="546.8" r="5.3" fill="#000" stroke="#ffffff" stroke-width="1.9"/>
<circle cx="434.3" cy="546.8" r="2.5" fill="none" stroke="#5cc05c" stroke-width="1.2"/>
<ellipse cx="434.3" cy="546.8" rx="0.9" ry="0.9" fill="#c83030"/>
<polygon points="454.0,543.5 457.3,546.8 454.0,550.1 450.7,546.8" fill="none" stroke="#ffffff" stroke-width="1.1"/>
<circle cx="438.9" cy="517.8" r="5.3" fill="#000" stroke="#ffffff" stroke-width="1.9"/>
<circle cx="438.9" cy="517.8" r="2.5" fill="none" stroke="#5cc05c" stroke-width="1.2"/>
<ellipse cx="438.9" cy="517.8" rx="0.9" ry="0.9" fill="#c83030"/>
<circle cx="457.6" cy="523.8" r="2.8" fill="#000" stroke="#ffffff" stroke-width="1.1"/>
<circle cx="452.3" cy="491.5" r="5.3" fill="#000" stroke="#ffffff" stroke-width="1.9"/>
<circle cx="452.3" cy="491.5" r="2.5" fill="none" stroke="#5cc05c" stroke-width="1.2"/>
<ellipse cx="452.3" cy="491.5" rx="0.9" ry="0.9" fill="#c83030"/>
<circle cx="468.2" cy="503.1" r="2.8" fill="#000" stroke="#ffffff" stroke-width="1.1"/>
<circle cx="473.0" cy="470.8" r="5.3" fill="#000" stroke="#ffffff" stroke-width="1.9"/>
<circle cx="473.0" cy="470.8" r="2.5" fill="none" stroke="#5cc05c" stroke-width="1.2"/>
<ellipse cx="473.0" cy="470.8" rx="0.9" ry="0.9" fill="#c83030"/>
<circle cx="484.6" cy="486.7" r="2.8" fill="#000" stroke="#ffffff" stroke-width="1.1"/>
<circle cx="499.3" cy="457.4" r="5.3" fill="#000" stroke="#ffffff" stroke-width="1.9"/>
<circle cx="499.3" cy="457.4" r="2.5" fill="none" stroke="#5cc05c" stroke-width="1.2"/>
<ellipse cx="499.3" cy="457.4" rx="0.9" ry="0.9" fill="#c83030"/>
<circle cx="505.3" cy="476.1" r="2.8" fill="#000" stroke="#ffffff" stroke-width="1.1"/>
<polygon points="543.7,457.6 545.0,449.7 542.4,449.3 541.2,457.2" fill="none" stroke="#ffffff" stroke-width="1.0"/>
<polygon points="593.2,483.7 598.9,478.1 597.0,476.2 591.4,481.9" fill="none" stroke="#ffffff" stroke-width="1.0"/>
<polygon points="617.9,533.9 625.8,532.7 625.4,530.1 617.5,531.4" fill="none" stroke="#ffffff" stroke-width="1.0"/>
<polygon points="608.3,589.0 615.5,592.7 616.7,590.4 609.5,586.7" fill="none" stroke="#ffffff" stroke-width="1.0"/>
<polygon points="568.2,628.0 571.9,635.2 574.2,634.0 570.5,626.8" fill="none" stroke="#ffffff" stroke-width="1.0"/>
<polygon points="512.9,636.0 511.6,643.9 514.2,644.3 515.4,636.4" fill="none" stroke="#ffffff" stroke-width="1.0"/>
<polygon points="463.4,609.9 457.7,615.5 459.6,617.4 465.2,611.7" fill="none" stroke="#ffffff" stroke-width="1.0"/>
<polygon points="438.7,559.7 430.8,560.9 431.2,563.5 439.1,562.2" fill="none" stroke="#ffffff" stroke-width="1.0"/>
<polygon points="448.3,504.6 441.1,500.9 439.9,503.2 447.1,506.9" fill="none" stroke="#ffffff" stroke-width="1.0"/>
<polygon points="488.4,465.6 484.7,458.4 482.4,459.6 486.1,466.8" fill="none" stroke="#ffffff" stroke-width="1.0"/>
<line x1="449.9" y1="609.3" x2="668.6" y2="433.1" stroke="#c83030" stroke-width="1.2"/>
<line x1="668.6" y1="433.5" x2="727.6" y2="433.5" stroke="#c83030" stroke-width="1.2"/>
<line x1="454.0" y1="579.5" x2="668.6" y2="485.0" stroke="#c83030" stroke-width="1.2"/>
<line x1="668.6" y1="485.5" x2="727.6" y2="485.5" stroke="#c83030" stroke-width="1.2"/>
<text x="698.4" y="433.0" fill="#c83030" font-size="10.7" font-family="Liberation Sans" text-anchor="start" textLength="28.6" lengthAdjust="spacingAndGlyphs">Ø626</text>
<text x="698.4" y="485.0" fill="#c83030" font-size="10.7" font-family="Liberation Sans" text-anchor="start" textLength="28.6" lengthAdjust="spacingAndGlyphs">Ø494</text>
<line x1="148.6" y1="355.5" x2="162.9" y2="355.5" stroke="#e04ee0" stroke-width="1"/>
<line x1="162.9" y1="355.8" x2="220.9" y2="426.7" stroke="#e04ee0" stroke-width="1"/>
<text x="154.3" y="350.6" fill="#e04ee0" font-size="12.5" font-family="Liberation Sans" text-anchor="middle">1</text>
<line x1="175.8" y1="355.5" x2="194.3" y2="355.5" stroke="#e04ee0" stroke-width="1"/>
<line x1="194.3" y1="355.8" x2="247.8" y2="428.7" stroke="#e04ee0" stroke-width="1"/>
<text x="180.8" y="350.6" fill="#e04ee0" font-size="12.5" font-family="Liberation Sans" text-anchor="middle">2</text>
<line x1="269.3" y1="336.5" x2="293.6" y2="336.5" stroke="#e04ee0" stroke-width="1"/>
<line x1="269.3" y1="344.5" x2="293.6" y2="344.5" stroke="#e04ee0" stroke-width="1"/>
<line x1="269.3" y1="355.5" x2="293.6" y2="355.5" stroke="#e04ee0" stroke-width="1"/>
<line x1="293.5" y1="336.3" x2="293.5" y2="355.2" stroke="#e04ee0" stroke-width="1"/>
<line x1="293.6" y1="355.2" x2="250.1" y2="415.8" stroke="#e04ee0" stroke-width="1"/>
<text x="282.2" y="333.5" fill="#e04ee0" font-size="12" font-family="Liberation Sans" text-anchor="middle">5</text>
<text x="280.6" y="343.5" fill="#e04ee0" font-size="9.5" font-family="Liberation Sans" text-anchor="middle">4</text>
<text x="280.6" y="354.0" fill="#e04ee0" font-size="10" font-family="Liberation Sans" text-anchor="middle">3</text>
<text x="828.3" y="412.5" fill="#f2f040" font-size="10" font-family="Liberation Sans" text-anchor="start" textLength="35" lengthAdjust="spacingAndGlyphs">技术要求</text>
<text x="815.5" y="426.4" fill="#f2f040" font-size="9.5" font-family="Liberation Sans" text-anchor="start" font-weight="normal">1.</text>
<text x="823.0" y="426.4" fill="#f2f040" font-size="6.5" font-family="Liberation Sans" text-anchor="start" font-weight="bold" textLength="29.9" lengthAdjust="spacingAndGlyphs">钢板焊接后矫形</text>
<text x="815.5" y="437.8" fill="#f2f040" font-size="9.5" font-family="Liberation Sans" text-anchor="start" font-weight="normal">2.</text>
<text x="823.0" y="437.8" fill="#f2f040" font-size="6.5" font-family="Liberation Sans" text-anchor="start" font-weight="bold" textLength="36.2" lengthAdjust="spacingAndGlyphs">未注尺寸 按图制作</text>
<text x="815.5" y="450.0" fill="#f2f040" font-size="9.5" font-family="Liberation Sans" text-anchor="start" font-weight="normal">3.</text>
<text x="823.0" y="450.0" fill="#f2f040" font-size="6.5" font-family="Liberation Sans" text-anchor="start" font-weight="bold" textLength="40.2" lengthAdjust="spacingAndGlyphs">未注工艺要求按标准</text>
<line x1="794.1" y1="538.5" x2="1010.5" y2="538.5" stroke="#ffffff" stroke-width="1.3"/>
<line x1="794.1" y1="546.5" x2="1010.5" y2="546.5" stroke="#ffffff" stroke-width="1.3"/>
<line x1="794.1" y1="555.5" x2="1010.5" y2="555.5" stroke="#ffffff" stroke-width="1.3"/>
<line x1="794.1" y1="563.5" x2="1010.5" y2="563.5" stroke="#ffffff" stroke-width="1.3"/>
<line x1="794.1" y1="571.5" x2="1010.5" y2="571.5" stroke="#ffffff" stroke-width="1.3"/>
<line x1="794.1" y1="580.5" x2="1010.5" y2="580.5" stroke="#ffffff" stroke-width="1.3"/>
<line x1="794.1" y1="588.5" x2="1010.5" y2="588.5" stroke="#ffffff" stroke-width="1.3"/>
<line x1="794.1" y1="596.5" x2="1010.5" y2="596.5" stroke="#ffffff" stroke-width="1.3"/>
<line x1="794.1" y1="605.5" x2="1010.5" y2="605.5" stroke="#ffffff" stroke-width="1.3"/>
<line x1="794.1" y1="613.5" x2="1010.5" y2="613.5" stroke="#ffffff" stroke-width="1.3"/>
<line x1="794.1" y1="621.5" x2="1010.5" y2="621.5" stroke="#ffffff" stroke-width="1.3"/>
<line x1="794.1" y1="630.5" x2="1010.5" y2="630.5" stroke="#ffffff" stroke-width="1.3"/>
<line x1="794.1" y1="639.5" x2="1010.5" y2="639.5" stroke="#ffffff" stroke-width="1.3"/>
<line x1="794.1" y1="656.5" x2="1010.5" y2="656.5" stroke="#ffffff" stroke-width="1.3"/>
<line x1="794.5" y1="538.2" x2="794.5" y2="656.2" stroke="#ffffff" stroke-width="1.3"/>
<line x1="803.5" y1="538.2" x2="803.5" y2="656.2" stroke="#ffffff" stroke-width="1.3"/>
<line x1="851.5" y1="538.2" x2="851.5" y2="656.2" stroke="#ffffff" stroke-width="1.3"/>
<line x1="904.5" y1="538.2" x2="904.5" y2="656.2" stroke="#ffffff" stroke-width="1.3"/>
<line x1="914.5" y1="538.2" x2="914.5" y2="656.2" stroke="#ffffff" stroke-width="1.3"/>
<line x1="959.5" y1="538.2" x2="959.5" y2="656.2" stroke="#ffffff" stroke-width="1.3"/>
<line x1="971.5" y1="538.2" x2="971.5" y2="656.2" stroke="#ffffff" stroke-width="1.3"/>
<line x1="986.5" y1="538.2" x2="986.5" y2="656.2" stroke="#ffffff" stroke-width="1.3"/>
<line x1="1010.5" y1="538.2" x2="1010.5" y2="656.2" stroke="#ffffff" stroke-width="1.3"/>
<line x1="959.5" y1="647.5" x2="986.5" y2="647.5" stroke="#ffffff" stroke-width="1.3"/>
<line x1="794.7" y1="664.5" x2="890.5" y2="664.5" stroke="#ffffff" stroke-width="1.3"/>
<line x1="794.7" y1="672.5" x2="890.5" y2="672.5" stroke="#ffffff" stroke-width="1.3"/>
<line x1="794.7" y1="681.5" x2="890.5" y2="681.5" stroke="#ffffff" stroke-width="1.3"/>
<line x1="794.7" y1="689.5" x2="890.5" y2="689.5" stroke="#ffffff" stroke-width="1.3"/>
<line x1="794.7" y1="698.5" x2="890.5" y2="698.5" stroke="#ffffff" stroke-width="1.3"/>
<line x1="794.7" y1="706.5" x2="890.5" y2="706.5" stroke="#ffffff" stroke-width="1.3"/>
<line x1="794.7" y1="714.5" x2="890.5" y2="714.5" stroke="#ffffff" stroke-width="1.3"/>
<line x1="806.5" y1="656.2" x2="806.5" y2="689.7" stroke="#ffffff" stroke-width="1.3"/>
<line x1="818.5" y1="656.2" x2="818.5" y2="689.7" stroke="#ffffff" stroke-width="1.3"/>
<line x1="837.5" y1="656.2" x2="837.5" y2="689.7" stroke="#ffffff" stroke-width="1.3"/>
<line x1="856.5" y1="656.2" x2="856.5" y2="689.7" stroke="#ffffff" stroke-width="1.3"/>
<line x1="871.5" y1="656.2" x2="871.5" y2="689.7" stroke="#ffffff" stroke-width="1.3"/>
<line x1="808.5" y1="689.7" x2="808.5" y2="723.2" stroke="#ffffff" stroke-width="1.3"/>
<line x1="822.5" y1="689.7" x2="822.5" y2="723.2" stroke="#ffffff" stroke-width="1.3"/>
<line x1="842.5" y1="689.7" x2="842.5" y2="723.2" stroke="#ffffff" stroke-width="1.3"/>
<line x1="856.5" y1="689.7" x2="856.5" y2="723.2" stroke="#ffffff" stroke-width="1.3"/>
<line x1="871.5" y1="689.7" x2="871.5" y2="723.2" stroke="#ffffff" stroke-width="1.3"/>
<line x1="794.5" y1="656.2" x2="794.5" y2="723.2" stroke="#ffffff" stroke-width="1.3"/>
<line x1="890.5" y1="656.2" x2="890.5" y2="723.2" stroke="#ffffff" stroke-width="1.3"/>
<line x1="950.5" y1="656.2" x2="950.5" y2="723.2" stroke="#ffffff" stroke-width="1.3"/>
<line x1="950.7" y1="683.5" x2="1010.5" y2="683.5" stroke="#ffffff" stroke-width="1.3"/>
<line x1="890.5" y1="701.5" x2="1010.5" y2="701.5" stroke="#ffffff" stroke-width="1.3"/>
<line x1="890.5" y1="689.5" x2="950.7" y2="689.5" stroke="#ffffff" stroke-width="1.3"/>
<line x1="890.5" y1="712.5" x2="950.7" y2="712.5" stroke="#ffffff" stroke-width="1.3"/>
<line x1="921.5" y1="689.7" x2="921.5" y2="712.4" stroke="#ffffff" stroke-width="1.3"/>
<line x1="935.5" y1="689.7" x2="935.5" y2="712.4" stroke="#ffffff" stroke-width="1.3"/>
<line x1="898.5" y1="701.8" x2="898.5" y2="712.4" stroke="#ffffff" stroke-width="1.3"/>
<line x1="905.5" y1="701.8" x2="905.5" y2="712.4" stroke="#ffffff" stroke-width="1.3"/>
<line x1="913.5" y1="701.8" x2="913.5" y2="712.4" stroke="#ffffff" stroke-width="1.3"/>
<text x="798.8" y="545.0" fill="#f2f040" font-size="7" font-family="Liberation Sans" text-anchor="middle" font-weight="bold">12</text>
<text x="815.0" y="545.0" fill="#f2f040" font-size="7" font-family="Liberation Sans" text-anchor="start" font-weight="bold">XTL12</text>
<text x="857.0" y="545.8" fill="#f2f040" font-size="6.5" font-family="Liberation Sans" text-anchor="start" font-weight="bold">摆臂</text>
<text x="905.5" y="545.0" fill="#f2f040" font-size="7" font-family="Liberation Sans" text-anchor="start" font-weight="bold">1</text>
<text x="798.8" y="553.5" fill="#f2f040" font-size="7" font-family="Liberation Sans" text-anchor="middle" font-weight="bold">11</text>
<text x="815.0" y="553.5" fill="#f2f040" font-size="7" font-family="Liberation Sans" text-anchor="start" font-weight="bold">GB95-85</text>
<text x="857.0" y="554.3" fill="#f2f040" font-size="6.5" font-family="Liberation Sans" text-anchor="start" font-weight="bold">垫</text>
<text x="905.5" y="553.5" fill="#f2f040" font-size="7" font-family="Liberation Sans" text-anchor="start" font-weight="bold">20</text>
<text x="798.8" y="561.9" fill="#f2f040" font-size="7" font-family="Liberation Sans" text-anchor="middle" font-weight="bold">10</text>
<text x="815.0" y="561.9" fill="#f2f040" font-size="7" font-family="Liberation Sans" text-anchor="start" font-weight="bold">GB6170-86</text>
<text x="857.0" y="562.7" fill="#f2f040" font-size="6.5" font-family="Liberation Sans" text-anchor="start" font-weight="bold">螺母M16</text>
<text x="905.5" y="561.9" fill="#f2f040" font-size="7" font-family="Liberation Sans" text-anchor="start" font-weight="bold">20</text>
<text x="798.8" y="570.2" fill="#f2f040" font-size="7" font-family="Liberation Sans" text-anchor="middle" font-weight="bold">9</text>
<text x="815.0" y="570.2" fill="#f2f040" font-size="7" font-family="Liberation Sans" text-anchor="start" font-weight="bold">GB5782-86</text>
<text x="857.0" y="571.0" fill="#f2f040" font-size="6.5" font-family="Liberation Sans" text-anchor="start" font-weight="bold">螺栓M16X105</text>
<text x="905.5" y="570.2" fill="#f2f040" font-size="7" font-family="Liberation Sans" text-anchor="start" font-weight="bold">20</text>
<text x="798.8" y="578.5" fill="#f2f040" font-size="7" font-family="Liberation Sans" text-anchor="middle" font-weight="bold">8</text>
<text x="815.0" y="578.5" fill="#f2f040" font-size="7" font-family="Liberation Sans" text-anchor="start" font-weight="bold">XTL08</text>
<text x="857.0" y="579.3" fill="#f2f040" font-size="6.5" font-family="Liberation Sans" text-anchor="start" font-weight="bold">上轴承</text>
<text x="905.5" y="578.5" fill="#f2f040" font-size="7" font-family="Liberation Sans" text-anchor="start" font-weight="bold">1</text>
<text x="798.8" y="586.9" fill="#f2f040" font-size="7" font-family="Liberation Sans" text-anchor="middle" font-weight="bold">7</text>
<text x="815.0" y="586.9" fill="#f2f040" font-size="7" font-family="Liberation Sans" text-anchor="start" font-weight="bold">XTL07</text>
<text x="857.0" y="587.7" fill="#f2f040" font-size="6.5" font-family="Liberation Sans" text-anchor="start" font-weight="bold">下轴承</text>
<text x="905.5" y="586.9" fill="#f2f040" font-size="7" font-family="Liberation Sans" text-anchor="start" font-weight="bold">1</text>
<text x="798.8" y="595.3" fill="#f2f040" font-size="7" font-family="Liberation Sans" text-anchor="middle" font-weight="bold">6</text>
<text x="815.0" y="595.3" fill="#f2f040" font-size="7" font-family="Liberation Sans" text-anchor="start" font-weight="bold">XTL06</text>
<text x="857.0" y="596.1" fill="#f2f040" font-size="6.5" font-family="Liberation Sans" text-anchor="start" font-weight="bold">轴承</text>
<text x="905.5" y="595.3" fill="#f2f040" font-size="7" font-family="Liberation Sans" text-anchor="start" font-weight="bold">1</text>
<text x="798.8" y="603.6" fill="#f2f040" font-size="7" font-family="Liberation Sans" text-anchor="middle" font-weight="bold">5</text>
<text x="815.0" y="603.6" fill="#f2f040" font-size="7" font-family="Liberation Sans" text-anchor="start" font-weight="bold">GB95-85</text>
<text x="857.0" y="604.4" fill="#f2f040" font-size="6.5" font-family="Liberation Sans" text-anchor="start" font-weight="bold">垫</text>
<text x="905.5" y="603.6" fill="#f2f040" font-size="7" font-family="Liberation Sans" text-anchor="start" font-weight="bold">4</text>
<text x="798.8" y="612.0" fill="#f2f040" font-size="7" font-family="Liberation Sans" text-anchor="middle" font-weight="bold">4</text>
<text x="815.0" y="612.0" fill="#f2f040" font-size="7" font-family="Liberation Sans" text-anchor="start" font-weight="bold">GB6170-86</text>
<text x="857.0" y="612.8" fill="#f2f040" font-size="6.5" font-family="Liberation Sans" text-anchor="start" font-weight="bold">螺母M20</text>
<text x="905.5" y="612.0" fill="#f2f040" font-size="7" font-family="Liberation Sans" text-anchor="start" font-weight="bold">4</text>
<text x="798.8" y="620.3" fill="#f2f040" font-size="7" font-family="Liberation Sans" text-anchor="middle" font-weight="bold">3</text>
<text x="815.0" y="620.3" fill="#f2f040" font-size="7" font-family="Liberation Sans" text-anchor="start" font-weight="bold">GB5782-86</text>
<text x="857.0" y="621.1" fill="#f2f040" font-size="6.5" font-family="Liberation Sans" text-anchor="start" font-weight="bold">螺栓M20X65</text>
<text x="905.5" y="620.3" fill="#f2f040" font-size="7" font-family="Liberation Sans" text-anchor="start" font-weight="bold">4</text>
<text x="798.8" y="628.7" fill="#f2f040" font-size="7" font-family="Liberation Sans" text-anchor="middle" font-weight="bold">2</text>
<text x="815.0" y="628.7" fill="#f2f040" font-size="7" font-family="Liberation Sans" text-anchor="start" font-weight="bold">XTL02</text>
<text x="857.0" y="629.5" fill="#f2f040" font-size="6.5" font-family="Liberation Sans" text-anchor="start" font-weight="bold">肋板</text>
<text x="905.5" y="628.7" fill="#f2f040" font-size="7" font-family="Liberation Sans" text-anchor="start" font-weight="bold">2</text>
<text x="798.8" y="637.0" fill="#f2f040" font-size="7" font-family="Liberation Sans" text-anchor="middle" font-weight="bold">1</text>
<text x="815.0" y="637.0" fill="#f2f040" font-size="7" font-family="Liberation Sans" text-anchor="start" font-weight="bold">XTL01</text>
<text x="857.0" y="637.8" fill="#f2f040" font-size="6.5" font-family="Liberation Sans" text-anchor="start" font-weight="bold">轴</text>
<text x="905.5" y="637.0" fill="#f2f040" font-size="7" font-family="Liberation Sans" text-anchor="start" font-weight="bold">2</text>
<text x="964.0" y="697.8" fill="#f2f040" font-size="8" font-family="Liberation Sans" text-anchor="start" font-weight="bold" textLength="20.5" lengthAdjust="spacingAndGlyphs">摆动架</text>
<text x="962.4" y="717.0" fill="#f2f040" font-size="13" font-family="Liberation Sans" text-anchor="start" textLength="27.6" lengthAdjust="spacingAndGlyphs" font-weight="300">XT11</text>
<text x="798.8" y="647.0" fill="#f2f040" font-size="6" font-family="Liberation Sans" text-anchor="middle" font-weight="bold">序</text>
<text x="798.8" y="655.0" fill="#f2f040" font-size="6" font-family="Liberation Sans" text-anchor="middle" font-weight="bold">号</text>
<text x="814.0" y="651.0" fill="#f2f040" font-size="6" font-family="Liberation Sans" text-anchor="middle" font-weight="bold">代</text>
<text x="837.0" y="651.0" fill="#f2f040" font-size="6" font-family="Liberation Sans" text-anchor="middle" font-weight="bold">号</text>
<text x="864.0" y="651.0" fill="#f2f040" font-size="6" font-family="Liberation Sans" text-anchor="middle" font-weight="bold">名</text>
<text x="887.5" y="651.0" fill="#f2f040" font-size="6" font-family="Liberation Sans" text-anchor="middle" font-weight="bold">称</text>
<text x="909.5" y="647.0" fill="#f2f040" font-size="6" font-family="Liberation Sans" text-anchor="middle" font-weight="bold">数</text>
<text x="909.5" y="655.0" fill="#f2f040" font-size="6" font-family="Liberation Sans" text-anchor="middle" font-weight="bold">量</text>
<text x="926.5" y="651.0" fill="#f2f040" font-size="6" font-family="Liberation Sans" text-anchor="middle" font-weight="bold">材</text>
<text x="942.5" y="651.0" fill="#f2f040" font-size="6" font-family="Liberation Sans" text-anchor="middle" font-weight="bold">料</text>
<text x="960.5" y="645.5" fill="#f2f040" font-size="5" font-family="Liberation Sans" text-anchor="start" font-weight="bold" textLength="10" lengthAdjust="spacingAndGlyphs">单件</text>
<text x="972.5" y="645.5" fill="#f2f040" font-size="5" font-family="Liberation Sans" text-anchor="start" font-weight="bold" textLength="10" lengthAdjust="spacingAndGlyphs">总计</text>
<text x="966.3" y="655.0" fill="#f2f040" font-size="6" font-family="Liberation Sans" text-anchor="middle" font-weight="bold">重</text>
<text x="982.7" y="655.0" fill="#f2f040" font-size="6" font-family="Liberation Sans" text-anchor="middle" font-weight="bold">量</text>
<text x="993.0" y="652.0" fill="#f2f040" font-size="6" font-family="Liberation Sans" text-anchor="middle" font-weight="bold">备</text>
<text x="1004.6" y="652.0" fill="#f2f040" font-size="6" font-family="Liberation Sans" text-anchor="middle" font-weight="bold">注</text>
<text x="796.0" y="689.0" fill="#f2f040" font-size="6" font-family="Liberation Sans" text-anchor="start" font-weight="bold" textLength="13" lengthAdjust="spacingAndGlyphs">标记</text>
<text x="814.0" y="689.0" fill="#f2f040" font-size="6" font-family="Liberation Sans" text-anchor="start" font-weight="bold" textLength="14" lengthAdjust="spacingAndGlyphs">处数</text>
<text x="829.0" y="689.0" fill="#f2f040" font-size="6" font-family="Liberation Sans" text-anchor="start" font-weight="bold" textLength="9" lengthAdjust="spacingAndGlyphs">分区</text>
<text x="838.0" y="689.0" fill="#f2f040" font-size="6" font-family="Liberation Sans" text-anchor="start" font-weight="bold" textLength="18" lengthAdjust="spacingAndGlyphs">更改文件号</text>
<text x="858.0" y="689.0" fill="#f2f040" font-size="6" font-family="Liberation Sans" text-anchor="start" font-weight="bold" textLength="9" lengthAdjust="spacingAndGlyphs">签名</text>
<text x="872.0" y="689.0" fill="#f2f040" font-size="6" font-family="Liberation Sans" text-anchor="start" font-weight="bold" textLength="16" lengthAdjust="spacingAndGlyphs">年月日</text>
<text x="796.0" y="697.0" fill="#f2f040" font-size="6" font-family="Liberation Sans" text-anchor="start" font-weight="bold" textLength="12" lengthAdjust="spacingAndGlyphs">设计</text>
<text x="843.0" y="697.0" fill="#f2f040" font-size="6" font-family="Liberation Sans" text-anchor="start" font-weight="bold" textLength="11" lengthAdjust="spacingAndGlyphs">标准化</text>
<text x="796.0" y="713.0" fill="#f2f040" font-size="6" font-family="Liberation Sans" text-anchor="start" font-weight="bold" textLength="12" lengthAdjust="spacingAndGlyphs">审核</text>
<text x="796.0" y="722.0" fill="#f2f040" font-size="6" font-family="Liberation Sans" text-anchor="start" font-weight="bold" textLength="12" lengthAdjust="spacingAndGlyphs">工艺</text>
<text x="844.0" y="722.0" fill="#f2f040" font-size="6" font-family="Liberation Sans" text-anchor="start" font-weight="bold" textLength="10" lengthAdjust="spacingAndGlyphs">批准</text>
<text x="893.5" y="698.5" fill="#f2f040" font-size="6" font-family="Liberation Sans" text-anchor="start" font-weight="bold" textLength="26" lengthAdjust="spacingAndGlyphs">阶段标记</text>
<text x="923.0" y="698.5" fill="#f2f040" font-size="6" font-family="Liberation Sans" text-anchor="start" font-weight="bold" textLength="11" lengthAdjust="spacingAndGlyphs">重量</text>
<text x="937.5" y="698.5" fill="#f2f040" font-size="6" font-family="Liberation Sans" text-anchor="start" font-weight="bold" textLength="10" lengthAdjust="spacingAndGlyphs">比例</text>
<text x="939.0" y="708.5" fill="#f2f040" font-size="5.5" font-family="Liberation Sans" text-anchor="start" font-weight="bold" textLength="6" lengthAdjust="spacingAndGlyphs">1:4</text>
<text x="905.0" y="721.0" fill="#f2f040" font-size="6" font-family="Liberation Sans" text-anchor="middle" font-weight="bold">共</text>
<text x="919.0" y="721.0" fill="#f2f040" font-size="6" font-family="Liberation Sans" text-anchor="middle" font-weight="bold">张</text>
<text x="926.5" y="721.0" fill="#f2f040" font-size="6" font-family="Liberation Sans" text-anchor="middle" font-weight="bold">第</text>
<text x="940.5" y="721.0" fill="#f2f040" font-size="6" font-family="Liberation Sans" text-anchor="middle" font-weight="bold">张</text>
</g>
</svg>
</body></html>
